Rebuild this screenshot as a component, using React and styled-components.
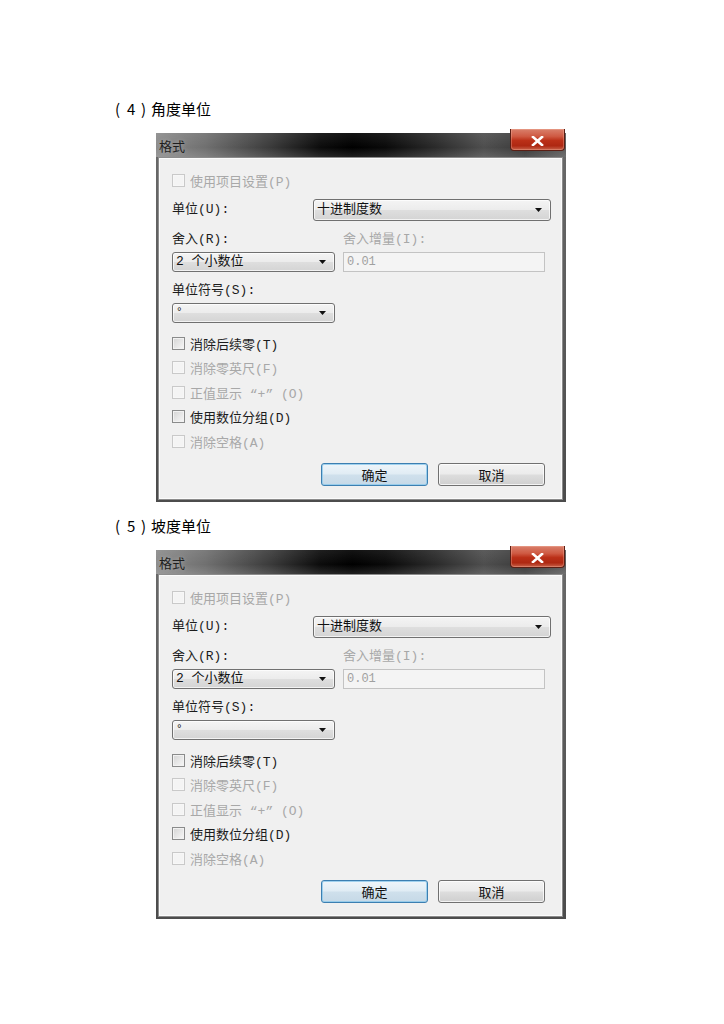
import React from 'react'
import styled, { createGlobalStyle } from 'styled-components'

const GlobalStyle = createGlobalStyle`
  body {
    margin: 0;
    background: #fff;
  }
`

const Page = styled.div`
  display: flex;
  flex-direction: column;
  gap: 14px;
  padding: 99px 0 0 113px;
`

const Section = styled.section`
  display: flex;
  flex-direction: column;
  gap: 14px;
`

const Heading = styled.h2`
  margin: 0;
  height: 20px;
  padding-left: 2px;
  font: 400 15px/20px "Noto Sans CJK SC", sans-serif;
  color: #000;
`

const Paren = styled.span`
  display: inline-block;
  width: ${p => p.$width}px;
`

const Window = styled.div`
  position: relative;
  width: 410px;
  margin-left: 43px;
  padding: 0 3px 2px 2px;
  box-sizing: border-box;
  background: linear-gradient(180deg, #6a6a6a, #4c4c4c);
  font: 13px "Liberation Mono", "Noto Sans CJK SC", monospace;
`

const TitleBar = styled.div`
  height: 24px;
  margin: 0 -3px 0 -2px;
  padding-left: 3px;
  display: flex;
  align-items: center;
  background:
    linear-gradient(180deg, rgba(255, 255, 255, 0.08), rgba(0, 0, 0, 0) 60%, rgba(255, 255, 255, 0.12)),
    linear-gradient(90deg, #8c8c8c 0%, #707070 12%, #3a3a3a 28%, #0c0c0c 40%, #000 48%, #0a0a0a 56%, #2a2a2a 68%, #4e4e4e 80%, #3a3a3a 90%, #5c5c5c 100%);
  color: #1e1e1e;
  text-shadow: 0 0 4px rgba(255, 255, 255, 0.35);
`

const CloseButton = styled.div`
  position: absolute;
  top: -4px;
  right: 1px;
  width: 55px;
  height: 22px;
  box-sizing: border-box;
  display: flex;
  align-items: center;
  justify-content: center;
  padding-top: 2px;
  border: 1px solid #5a1e14;
  border-top: none;
  border-radius: 0 0 4px 4px;
  background: linear-gradient(180deg, #d9806c 0%, #cf5a43 35%, #bb3018 55%, #ae2812 80%, #c9624a 100%);
  box-shadow: inset 0 0 0 1px rgba(255, 200, 180, 0.3);
`

const Panel = styled.div`
  display: flex;
  flex-direction: column;
  padding: 13px 11px 13px 13px;
  border: 1px solid #8c8c8c;
  box-shadow: inset 0 0 0 1px #fbfbfb;
  background: #f0f0f0;
`

const CheckRow = styled.div`
  display: flex;
  align-items: center;
  gap: 5px;
  height: 18px;
  color: ${p => (p.$disabled ? '#a8a8a8' : '#1c1c1c')};
`

const Box = styled.span`
  width: 13px;
  height: 13px;
  box-sizing: border-box;
  border: 1px solid ${p => (p.$disabled ? '#c9c9c9' : '#8a8b8b')};
  background: ${p =>
    p.$disabled
      ? '#f4f4f4'
      : 'linear-gradient(135deg, #d4d4d4 0%, #e6e6e6 50%, #f7f7f7 100%)'};
  box-shadow: inset 0 0 0 1px ${p => (p.$disabled ? '#f7f7f7' : '#f2f2f2')};
`

const UnitRow = styled.div`
  display: flex;
  align-items: center;
  margin-top: 10px;
  height: 22px;
`

const Label = styled.div`
  height: 16px;
  line-height: 16px;
  color: ${p => (p.$disabled ? '#a8a8a8' : '#1c1c1c')};
  width: ${p => (p.$width ? `${p.$width}px` : 'auto')};
`

const Columns = styled.div`
  display: flex;
  gap: 8px;
  margin-top: 11px;
`

const Field = styled.div`
  display: flex;
  flex-direction: column;
  gap: 4px;
  margin-top: ${p => p.$top || 0}px;
`

const Select = styled.div`
  width: ${p => p.$width}px;
  height: ${p => p.$height || 20}px;
  box-sizing: border-box;
  display: flex;
  align-items: center;
  justify-content: space-between;
  padding: 0 8px 0 3px;
  border: 1px solid #707070;
  border-radius: 3px;
  background: linear-gradient(180deg, #f4f4f4 0%, #ececec 48%, #dedede 52%, #d4d4d4 100%);
  box-shadow: inset 0 0 0 1px rgba(255, 255, 255, 0.7);
  color: #111;
  line-height: 16px;
`

const Glyph = styled.span`
  font-size: ${p => p.$size || 13}px;
  align-self: ${p => (p.$top ? 'flex-start' : 'center')};
`

const TextBox = styled.div`
  width: 202px;
  height: 20px;
  box-sizing: border-box;
  display: flex;
  align-items: center;
  padding-left: 3px;
  border: 1px solid #c3c3c3;
  background: #f4f4f4;
  color: #a0a0a0;
  font-size: 12px;
`

const CheckList = styled.div`
  display: flex;
  flex-direction: column;
  gap: 6.5px;
  margin-top: 11px;
`

const ButtonBar = styled.div`
  display: flex;
  justify-content: flex-end;
  gap: 10px;
  margin-top: 13px;
  padding-right: 6px;
`

const Button = styled.div`
  width: 107px;
  height: 23px;
  box-sizing: border-box;
  display: flex;
  align-items: center;
  justify-content: center;
  border: 1px solid ${p => (p.$primary ? '#3c7fb1' : '#707070')};
  border-radius: 3px;
  background: ${p =>
    p.$primary
      ? 'linear-gradient(180deg, #eef5fa 0%, #e0ecf4 48%, #cfe0ec 52%, #c6d9e7 100%)'
      : 'linear-gradient(180deg, #f3f3f3 0%, #ebebeb 48%, #dddddd 52%, #cfcfcf 100%)'};
  box-shadow: inset 0 0 0 1px ${p => (p.$primary ? 'rgba(140, 200, 235, 0.8)' : 'rgba(255, 255, 255, 0.75)')};
  color: #111;
`

const Arrow = () => (
  <svg width="7" height="4" viewBox="0 0 7 4">
    <path d="M0 0h7L3.5 4z" fill="#111" />
  </svg>
)

const CloseIcon = () => (
  <svg width="13" height="10" viewBox="0 0 13 10">
    <path d="M2 1l9 8M11 1l-9 8" stroke="#fff" strokeWidth="2.6" strokeLinecap="square" />
  </svg>
)

const options = [
  { label: '消除后续零(T)' },
  { label: '消除零英尺(F)', disabled: true },
  { label: '正值显示 “+” (O)', disabled: true },
  { label: '使用数位分组(D)' },
  { label: '消除空格(A)', disabled: true },
]

function Check({ label, disabled }) {
  return (
    <CheckRow $disabled={disabled}>
      <Box $disabled={disabled} />
      {label}
    </CheckRow>
  )
}

function FormatDialog() {
  return (
    <Window>
      <TitleBar>格式</TitleBar>
      <CloseButton>
        <CloseIcon />
      </CloseButton>
      <Panel>
        <Check label="使用项目设置(P)" disabled />
        <UnitRow>
          <Label $width={141}>单位(U):</Label>
          <Select $width={238} $height={22}>
            十进制度数
            <Arrow />
          </Select>
        </UnitRow>
        <Columns>
          <Field>
            <Label>舍入(R):</Label>
            <Select $width={163}>
              2 个小数位
              <Arrow />
            </Select>
          </Field>
          <Field>
            <Label $disabled>舍入增量(I):</Label>
            <TextBox>0.01</TextBox>
          </Field>
        </Columns>
        <Field $top={11}>
          <Label>单位符号(S):</Label>
          <Select $width={163}>
            <Glyph $size={11} $top>°</Glyph>
            <Arrow />
          </Select>
        </Field>
        <CheckList>
          {options.map(o => (
            <Check key={o.label} {...o} />
          ))}
        </CheckList>
        <ButtonBar>
          <Button $primary>确定</Button>
          <Button>取消</Button>
        </ButtonBar>
      </Panel>
    </Window>
  )
}

const sections = [
  { num: '4', title: '角度单位' },
  { num: '5', title: '坡度单位' },
]

export default function App() {
  return (
    <>
      <GlobalStyle />
      <Page>
        {sections.map(s => (
          <Section key={s.num}>
            <Heading>
              <Paren $width={12}>(</Paren>
              <Paren $width={14}>{s.num}</Paren>
              <Paren $width={10}>)</Paren>
              {s.title}
            </Heading>
            <FormatDialog />
          </Section>
        ))}
      </Page>
    </>
  )
}
